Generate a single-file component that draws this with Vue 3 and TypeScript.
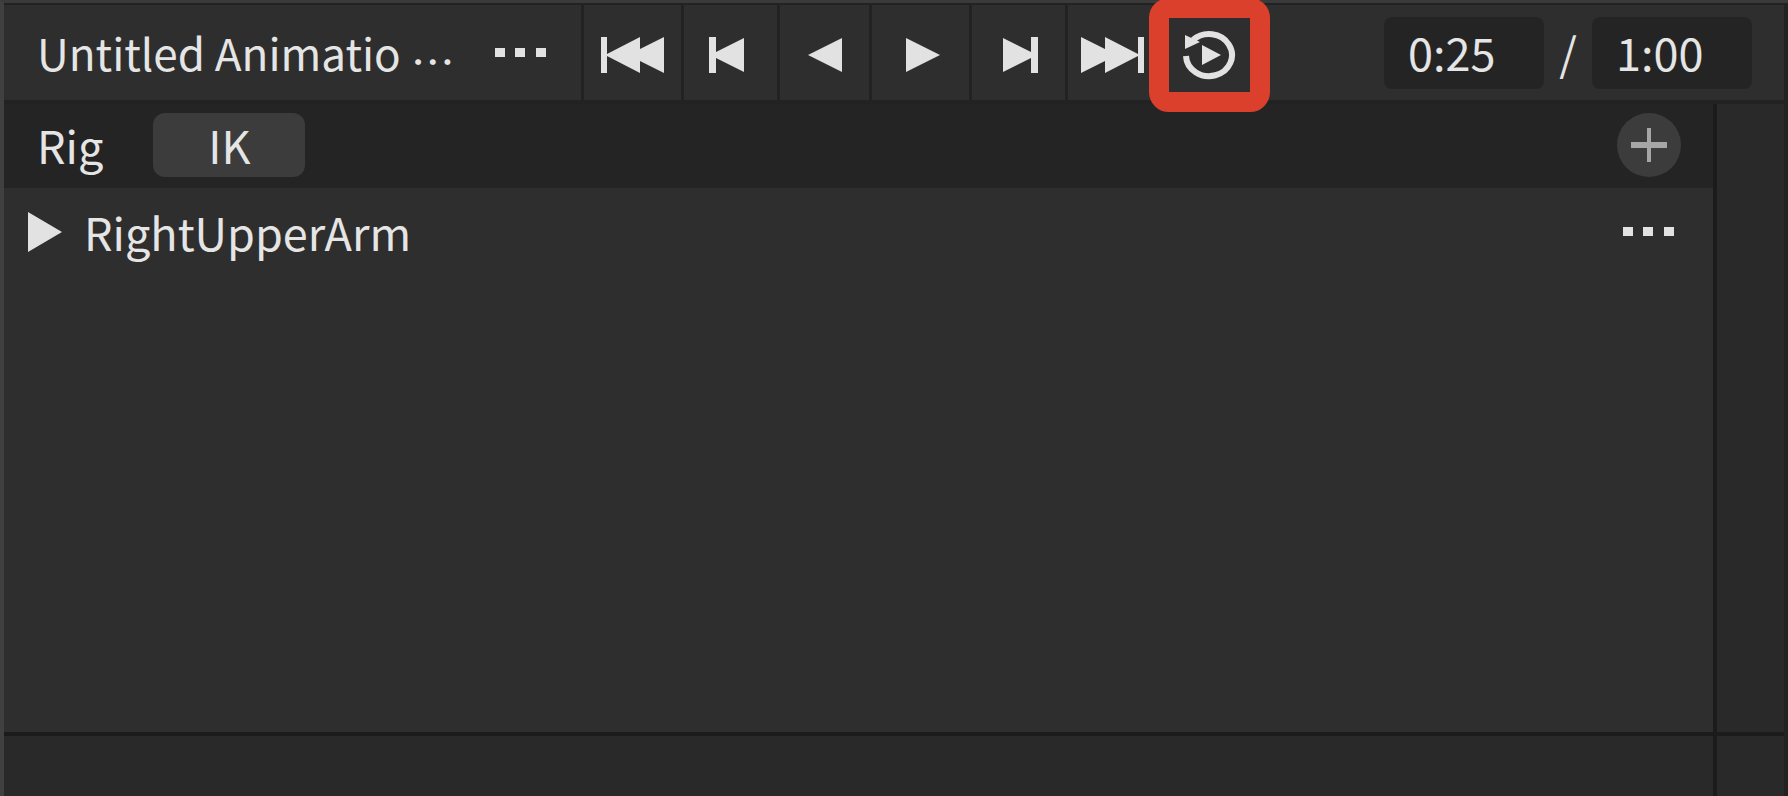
<script setup lang="ts">
import { ref } from 'vue'

interface TransportControl {
  id: string
  label: string
  width: number
  path: string
}

const controls: TransportControl[] = [
  { id: 'first', label: 'Go to first frame', width: 64, path: 'M0 0H6V17L39 0V12L63 0V36L39 24V36L6 19V36H0Z' },
  { id: 'previous', label: 'Previous frame', width: 36, path: 'M0 0H7V15L35 1V35L7 21V36H0Z' },
  { id: 'reverse', label: 'Play reversed', width: 34, path: 'M0 18L34 1V35Z' },
  { id: 'play', label: 'Play', width: 34, path: 'M0 1L34 18L0 35Z' },
  { id: 'next', label: 'Next frame', width: 36, path: 'M0 1L28 15V0H35V36H28V21L0 35Z' },
  { id: 'last', label: 'Go to last frame', width: 64, path: 'M0 0L24 12V0L57 17V0H63V36H57V19L24 36V24L0 36Z' },
]

const current = ref('0:25')
const total = ref('1:00')
const looping = ref(true)
const expanded = ref(false)
</script>

<template>
  <main class="editor">
    <header class="toolbar">
      <div class="title">
        <span class="name">Untitled Animatio<span class="more">…</span></span>
        <button class="dots" type="button" aria-label="Animation options">
          <svg width="52" height="10" viewBox="0 0 52 10"><path d="M0 0H10V9H0ZM20 0H30V9H20ZM41 0H51V9H41Z" /></svg>
        </button>
      </div>
      <div class="transport">
        <button v-for="c in controls" :key="c.id" :class="['control', c.id]" type="button" :aria-label="c.label">
          <svg :width="c.width" height="36" :viewBox="`0 0 ${c.width} 36`"><path :d="c.path" /></svg>
        </button>
        <button class="loop" type="button" aria-label="Loop" :aria-pressed="looping" @click="looping = !looping">
          <svg width="54" height="50" viewBox="0 0 54 50">
            <path class="ring" d="M4 26A23 21 0 1 0 11 10" />
            <path d="M3 5L18 12L3 19ZM20 15L39 25L20 35Z" />
          </svg>
        </button>
      </div>
      <div class="times">
        <input v-model="current" class="time" type="text" aria-label="Current time" />
        <span class="slash">/</span>
        <input v-model="total" class="time" type="text" aria-label="Length" />
      </div>
    </header>
    <div class="body">
      <section class="tracks">
        <div class="rig">
          <span>Rig</span>
          <button class="ik" type="button">IK</button>
          <button class="add" type="button" aria-label="Add track">
            <svg width="36" height="34" viewBox="0 0 36 34"><path d="M0 14H16V0H20V14H36V20H20V34H16V20H0Z" /></svg>
          </button>
        </div>
        <div class="track">
          <button class="toggle" type="button" aria-label="Expand RightUpperArm" :aria-expanded="expanded" @click="expanded = !expanded">
            <svg width="34" height="42" viewBox="0 0 34 42"><path d="M0 1L34 21L0 41Z" /></svg>
          </button>
          <span>RightUpperArm</span>
          <button class="dots" type="button" aria-label="Track options">
            <svg width="52" height="10" viewBox="0 0 52 10"><path d="M0 0H10V9H0ZM20 0H30V9H20ZM41 0H51V9H41Z" /></svg>
          </button>
        </div>
      </section>
      <div class="side"></div>
      <div class="foot"></div>
      <div class="side"></div>
    </div>
  </main>
</template>

<style>
body {
  margin: 0;
  background: #1b1b1b;
}
</style>

<style scoped>
.editor {
  box-sizing: border-box;
  height: 100vh;
  display: flex;
  flex-direction: column;
  padding-right: 4px;
  border-top: 3px solid #3a3a3a;
  border-left: 4px solid #404040;
  background: #222;
  color: #e5e5e5;
  font: 45px/64px "Noto Sans CJK KR", sans-serif;
}
.editor * {
  box-sizing: border-box;
}
button,
input {
  margin: 0;
  padding: 0;
  border: 0;
  background: none;
  color: inherit;
  font: inherit;
}
svg {
  display: block;
  fill: #e2e2e2;
}
.toolbar {
  display: flex;
  height: 101px;
  border-top: 2px solid #222;
  border-bottom: 4px solid #222;
  background: #2e2e2e;
}
.title {
  display: flex;
  align-items: center;
  justify-content: space-between;
  width: 577px;
  padding: 0 34px 0 33px;
}
.name {
  display: flex;
  align-items: center;
  gap: 10px;
  padding-bottom: 2px;
  font-size: 44px;
  white-space: nowrap;
}
.more {
  padding-top: 16px;
}
.transport {
  display: flex;
}
.control {
  display: flex;
  align-items: center;
  justify-content: center;
  width: 96px;
  padding-top: 4px;
  border-left: 3px solid #222;
}
.control.first {
  width: 100px;
}
.control.previous {
  padding-right: 8px;
}
.control.play {
  width: 100px;
  padding-left: 4px;
}
.control.reverse {
  width: 92px;
}
.control.next {
  padding-left: 4px;
}
.control.last {
  width: 84px;
  padding-left: 8px;
}
.loop {
  display: flex;
  align-items: center;
  justify-content: center;
  position: relative;
  width: 121px;
  padding: 4px 2px 0 0;
}
.loop::before {
  content: "";
  position: absolute;
  inset: -7px 0 -12px;
  border-radius: 20px;
  border: 20px solid #da402b;
}
.ring {
  fill: none;
  stroke: #e2e2e2;
  stroke-width: 6px;
}
.times {
  display: flex;
  align-items: center;
  margin-left: auto;
  padding-right: 32px;
}
.time {
  width: 160px;
  height: 72px;
  padding: 0 24px 2px;
  border-radius: 8px;
  background: #242424;
}
.slash {
  width: 48px;
  padding-bottom: 2px;
  text-align: center;
}
.body {
  flex: 1;
  display: grid;
  grid-template: 1fr 60px / 1fr 67px;
  gap: 4px;
  background: #1b1b1b;
}
.tracks {
  background: #2e2e2e;
}
.side,
.foot {
  background: #292929;
}
.rig {
  display: flex;
  align-items: center;
  height: 84px;
  padding: 0 32px 2px 33px;
  background: #242424;
}
.ik {
  width: 152px;
  height: 64px;
  margin-left: 50px;
  border-radius: 12px;
  background: #3c3c3c;
}
.add {
  display: grid;
  place-items: center;
  width: 64px;
  height: 64px;
  margin-left: auto;
  border-radius: 50%;
  background: #3c3c3c;
}
.add svg {
  fill: #a6a6a6;
}
.track {
  display: flex;
  align-items: center;
  height: 88px;
  padding: 0 38px 0 24px;
}
.toggle {
  margin-right: 22px;
}
.track .dots {
  margin-left: auto;
}
</style>
